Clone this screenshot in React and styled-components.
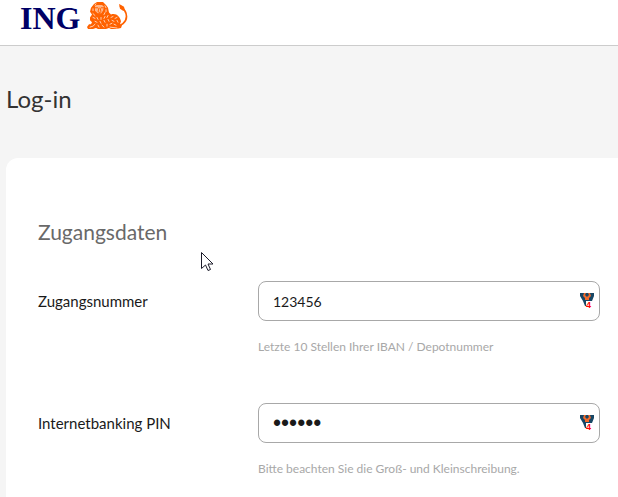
import React, { useState } from "react";
import styled, { createGlobalStyle } from "styled-components";

const GlobalStyle = createGlobalStyle`
  *, *::before, *::after { box-sizing: border-box; }
  html { height: 100%; }
  body {
    margin: 0;
    height: 100%;
    background: #f5f5f5;
    color: #1a1a1a;
    font-family: Lato, "Noto Sans", sans-serif;
  }
  #root { height: 100%; }
`;

const Page = styled.div`
  position: relative;
  min-height: 100%;
  display: flex;
  flex-direction: column;
`;

const Header = styled.header`
  display: flex;
  background: #fff;
  border-bottom: 1px solid #ccc;
  padding: 0 20px;
`;

const Brand = styled.a`
  display: flex;
  align-items: flex-start;
  gap: 7px;
  height: 45px;
  padding-top: 2px;
  color: #000066;
  text-decoration: none;
`;

const Wordmark = styled.span`
  font: 700 32px/32px "Liberation Serif", serif;
`;

const Main = styled.main`
  flex: 1;
  display: flex;
  flex-direction: column;
  padding-left: 6px;
`;

const Title = styled.h1`
  margin: 39px 0 45px;
  font-size: 24px;
  line-height: 28px;
  font-weight: 400;
  color: #333;
`;

const Card = styled.form`
  flex: 1;
  background: #fff;
  border-top-left-radius: 12px;
  padding: 60px 18px 18px 32px;
`;

const SectionTitle = styled.h2`
  margin: 0 0 35px;
  font-size: 21px;
  line-height: 28px;
  font-weight: 400;
  color: #696969;
`;

const Fields = styled.div`
  display: flex;
  flex-direction: column;
  gap: 47px;
`;

const Field = styled.div`
  display: grid;
  grid-template-columns: 220px 1fr;
`;

const Label = styled.label`
  font-size: 15px;
  line-height: 40px;
`;

const Control = styled.div`
  position: relative;
`;

const Input = styled.input`
  display: block;
  width: 100%;
  height: 40px;
  padding: 0 40px 0 14px;
  border: 1px solid #a8a8a8;
  border-radius: 8px;
  background: #fff;
  color: #1a1a1a;
  font-family: ${(p) =>
    p.type === "password" ? '"Liberation Sans", sans-serif' : "inherit"};
  font-size: ${(p) => (p.type === "password" ? "23px" : "14px")};
  outline: none;
`;

const Badge = styled.svg`
  position: absolute;
  top: 12px;
  right: 4px;
  font: 700 9px "Liberation Sans", sans-serif;
`;

const Hint = styled.p`
  margin: 17px 0 0;
  font-size: 12px;
  line-height: 18px;
  color: #a8a8a8;
`;

const Pointer = styled.svg`
  position: absolute;
  left: 201px;
  top: 252px;
  pointer-events: none;
`;

function Lion() {
  return (
    <svg width="41" height="28" viewBox="0 0 41 29" preserveAspectRatio="none" aria-hidden="true">
      <path
        d="M28 26C34 25 39.500 21 39.500 15C39.500 10 37 7 33 4"
        fill="none"
        stroke="#ff6200"
        strokeWidth="1.7"
      />
      <path d="M32 2L34 3L37 5L38 9L36 9L33 7Z" fill="#ff6200" />
      <path
        d="M7 2L10 0L16 0L19 3L21 6L22 11L24 13C29 11 33 15 34 20L33 23L35 24L34 27L29 28L24 28L22 27L19 28L11 28L9 27L6 28L1 28L0 26L2 23L4 23L5 21L3 19L3 16L5 13L3 10L4 6Z"
        fill="#ff6200"
      />
      <path d="M8 4L10 3H15L17 5L16 9L14 12H11L8 9Z" fill="#fff" opacity="0.55" />
      <path
        d="M8 6L11 6M14 6L17 6M12 6L11 10L13 11L14 10L13 6M10 13L12 12L15 13"
        fill="none"
        stroke="#ff6200"
        strokeWidth="1"
      />
      <g fill="none" stroke="#fff" strokeWidth="0.7" strokeLinecap="round">
        <path d="M8 3L9 2M18 4L19 6M6 7L6 9M19 8L19 10M6 12L8 14M17 13L18 11M6 16L8 17M10 16L11 18M14 16L14 18M18 15L17 17M21 14L20 16M8 20L10 21M13 20L14 22M17 19L18 21M21 18L22 20" />
        <path d="M24 16L26 15M28 17L30 16M25 19L27 20M30 19L31 21M23 23L25 22M27 23L29 24M3 26L6 25L8 23M11 24L12 26M15 24L17 26M20 23L20 25M23 26L30 27" />
      </g>
    </svg>
  );
}

function ManagerBadge() {
  return (
    <Badge width="16" height="17" viewBox="0 0 16 17" aria-hidden="true">
      <path d="M0 0H14V3L12 8H7L6 13H5L3 8L0 3Z" fill="#174766" />
      <path d="M4 0H6L5 2L7 4L9 2L8 0H10L11 3L9 5V7H5V5L3 3Z" fill="#f36b2b" />
      <path d="M6 8H12V16H6Z" fill="#fff" />
      <text x="6" y="15" fill="#f00">4</text>
    </Badge>
  );
}

function TextField({ id, label, hint, type, initial }) {
  const [value, setValue] = useState(initial);
  return (
    <Field>
      <Label htmlFor={id}>{label}</Label>
      <div>
        <Control>
          <Input
            id={id}
            type={type}
            value={value}
            onChange={(e) => setValue(e.target.value)}
            aria-describedby={`${id}-hint`}
          />
          <ManagerBadge />
        </Control>
        <Hint id={`${id}-hint`}>{hint}</Hint>
      </div>
    </Field>
  );
}

export default function App() {
  return (
    <>
      <GlobalStyle />
      <Page>
        <Header>
          <Brand href="#">
            <Wordmark>ING</Wordmark>
            <Lion />
          </Brand>
        </Header>
        <Main>
          <Title>Log-in</Title>
          <Card>
            <SectionTitle>Zugangsdaten</SectionTitle>
            <Fields>
              <TextField
                id="zugangsnummer"
                type="text"
                label="Zugangsnummer"
                initial="123456"
                hint="Letzte 10 Stellen Ihrer IBAN / Depotnummer"
              />
              <TextField
                id="pin"
                type="password"
                label="Internetbanking PIN"
                initial="123456"
                hint="Bitte beachten Sie die Groß- und Kleinschreibung."
              />
            </Fields>
          </Card>
        </Main>
        <Pointer width="13" height="20" viewBox="0 0 13 20" aria-hidden="true">
          <path
            d="M0.5 0.5V16.5L4.5 13L7 18.5L9.5 17.5L7 12H12Z"
            fill="#fff"
            stroke="#1c1c2b"
          />
        </Pointer>
      </Page>
    </>
  );
}
